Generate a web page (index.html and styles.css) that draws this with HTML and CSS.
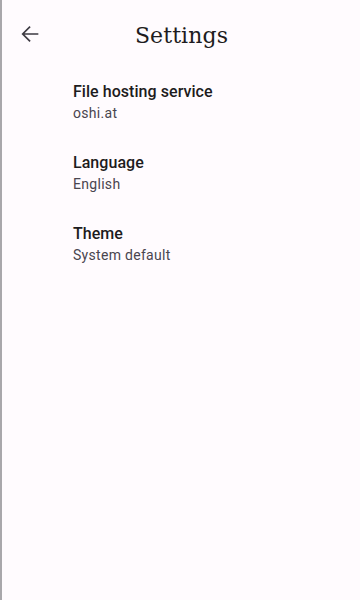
FILE: index.html
```html
<!DOCTYPE html>
<html>
<head>
<meta charset="utf-8">
<link rel="stylesheet" href="styles.css">
</head>
<body>
<div class="screen">
  <header class="topbar">
    <button class="back" aria-label="Back">
      <svg width="20" height="20" viewBox="0 0 20 20"><path d="M17.5 10H3M9.5 3.2L2.7 10l6.8 6.8" fill="none" stroke="#3d3a42" stroke-width="1.7" stroke-linecap="square"/></svg>
    </button>
    <h1 class="title">Settings</h1>
  </header>
  <ul class="list">
    <li class="item"><div class="label">File hosting service</div><div class="value">oshi.at</div></li>
    <li class="item"><div class="label">Language</div><div class="value">English</div></li>
    <li class="item"><div class="label">Theme</div><div class="value">System default</div></li>
  </ul>
</div>
</body>
</html>
```
FILE: styles.css
```css
html, body { margin: 0; padding: 0; }
body {
  background: #fffbfe;
  font-family: Roboto, "Noto Sans", sans-serif;
  color: #1d1b20;
}
.screen {
  width: 360px;
  height: 600px;
  box-sizing: border-box;
  border-left: 2px solid #a9a7ab;
  background: #fffbfe;
}
.topbar {
  display: flex;
  align-items: center;
  height: 70px;
  padding: 0 0 0 17px;
}
.back {
  width: 22px;
  height: 22px;
  padding: 0;
  margin-top: -2px;
  border: 0;
  background: none;
  display: flex;
  align-items: center;
  justify-content: center;
}
.title {
  margin: 0;
  flex: 1;
  text-align: center;
  font-family: "DejaVu Serif", serif;
  font-weight: normal;
  font-size: 22px;
  color: #1d1b20;
  padding-right: 38px;
  letter-spacing: 0.1px;
}
.list { list-style: none; margin: 0; padding: 0 0 0 71px; }
.item { height: 71px; padding-top: 11px; box-sizing: border-box; }
.label { font-size: 16px; font-weight: 500; line-height: 22px; letter-spacing: 0.05px; }
.value { font-size: 14px; line-height: 20px; color: #49454f; letter-spacing: 0.3px; }
```
